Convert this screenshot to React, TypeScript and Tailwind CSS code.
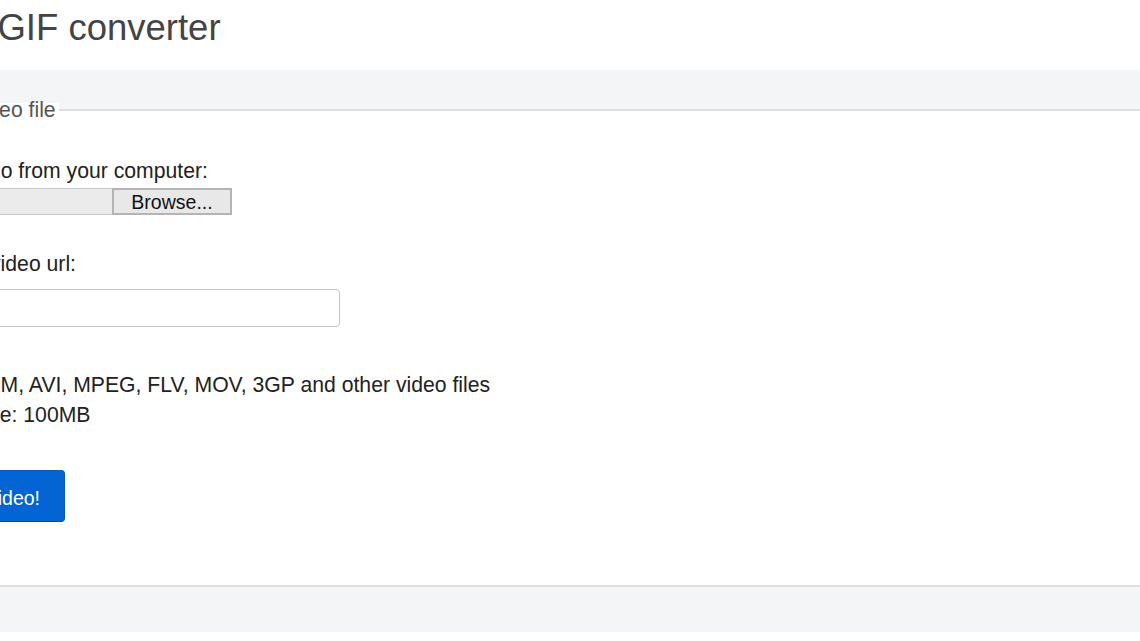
import React from "react";

export default function App() {
  return (
    <div className="w-[1140px] h-[641px] overflow-hidden bg-white font-['Liberation_Sans',Arial,sans-serif] text-[#222]">
      <div className="h-[70px] pt-[6px] box-border">
        <h1 className="ml-[-146px] whitespace-nowrap text-[36.5px] leading-[44px] font-normal text-[#444]">
          Video to GIF converter
        </h1>
      </div>

      <div className="h-[39px] bg-[#f4f5f7]" />
      <div className="relative h-[2px] bg-[#dedede]">
        <span className="absolute left-[-101px] top-[-6px] whitespace-nowrap bg-white pr-[3px] text-[21.2px] leading-[14px] text-[#555]">
          Upload video file
        </span>
      </div>

      <div className="ml-[-103px] text-[21.2px] leading-[30px]">
        <div className="mt-[45px] whitespace-nowrap">Select video from your computer:</div>
        <div className="mt-[2px] flex h-[27px]">
          <div className="w-[215px] h-full box-border border border-r-0 border-[#c9c9c9] bg-[#ebebeb]" />
          <div className="w-[120px] h-full box-border border-2 border-[#b4b4b4] bg-[#e8e8e8] flex items-center justify-center text-[19.5px] leading-[22px] text-[#111]">
            Browse...
          </div>
        </div>

        <div className="mt-[34px] whitespace-nowrap">Or type a video url:</div>
        <div className="mt-[10px] h-[38px] w-[443px] box-border rounded-[4px] border border-[#c4c4c4] bg-white" />

        <div className="mt-[43px] whitespace-nowrap">MP4, WEBM, AVI, MPEG, FLV, MOV, 3GP and other video files</div>
        <div className="ml-[-2px] whitespace-nowrap">Max file size: 100MB</div>

        <div className="mt-[40px] ml-[-7px] h-[52px] w-[175px] box-border rounded-[4px] border border-[#0a58b8] border-b-[#0049a0] bg-[#0365d3] flex items-center justify-end pr-[24px] pt-[3px] text-white text-[19.5px] leading-[30px] whitespace-nowrap">
          Upload video!
        </div>
      </div>

      <div className="mt-[63px] h-[2px] bg-[#e0e0e0]" />
      <div className="h-[45px] bg-[#f4f5f7]" />
    </div>
  );
}
